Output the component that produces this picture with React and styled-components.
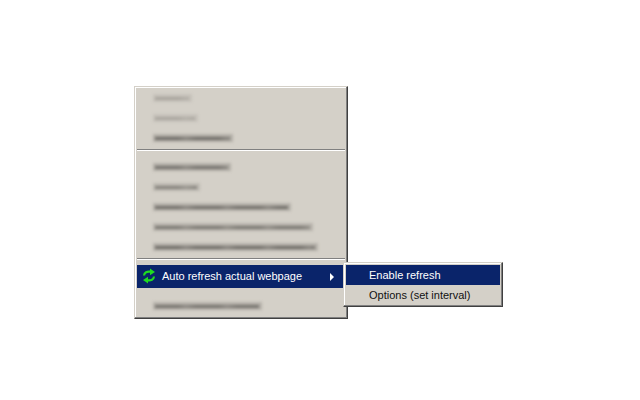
import React from 'react'
import styled, { createGlobalStyle } from 'styled-components'

const Global = createGlobalStyle`
  html, body { margin: 0; padding: 0; background: #fff; }
`

const Page = styled.div`
  width: 640px;
  height: 400px;
  padding: 86px 0 0 134px;
  box-sizing: border-box;
  font-family: "Liberation Sans", Arial, sans-serif;
  overflow: hidden;
`

const Menu = styled.div`
  position: relative;
  width: 214px;
  height: 233px;
  box-sizing: border-box;
  padding: 1px 2px;
  background: #d4d0c8;
  border: 1px solid;
  border-color: #d4d0c8 #404040 #404040 #d4d0c8;
  box-shadow: inset -1px -1px 0 #808080, inset 1px 1px 0 #fff;
  display: flex;
  flex-direction: column;
`

const Row = styled.div`
  height: 20px;
  flex: none;
  display: flex;
  align-items: center;
  padding-left: 16px;
  margin-top: ${p => p.$gap || 0}px;
`

const Smudge = styled.div`
  position: relative;
  width: ${p => p.$w}px;
  height: 8px;
  background: ${p => p.$base};
  filter: blur(1.6px);

  &::after {
    content: '';
    position: absolute;
    left: 2px;
    right: 3px;
    top: 3px;
    height: 3px;
    background: repeating-linear-gradient(
      to right,
      ${p => p.$c} 0,
      ${p => p.$c} 23px,
      color-mix(in srgb, ${p => p.$c} 65%, ${p => p.$base}) 31px,
      ${p => p.$c} 41px
    );
  }
`

const Separator = styled.div`
  height: 2px;
  flex: none;
  margin-top: 1px;
  background: linear-gradient(#808080 50%, #fff 50%);
`

const Active = styled.div`
  height: 23px;
  flex: none;
  margin-top: 5px;
  box-sizing: border-box;
  padding: 0 0 1px 4px;
  display: flex;
  align-items: center;
  background: #0a246a;
  color: #fff;
  position: relative;
`

const Label = styled.span`
  margin-left: 5px;
  font-size: 11px;
  white-space: nowrap;
`

const Arrow = styled.i`
  position: absolute;
  left: 193px;
  top: 8px;
  border-left: 4px solid #fff;
  border-top: 4px solid transparent;
  border-bottom: 4px solid transparent;
`

const Submenu = styled.div`
  position: absolute;
  left: 208px;
  top: 175px;
  width: 160px;
  height: 45px;
  box-sizing: border-box;
  padding: 2px;
  background: #d4d0c8;
  border: 1px solid;
  border-color: #d4d0c8 #404040 #404040 #d4d0c8;
  box-shadow: inset -1px -1px 0 #808080, inset 1px 1px 0 #fff;
`

const SubItem = styled.div`
  height: 20px;
  display: flex;
  align-items: center;
  padding-left: 23px;
  font-size: 11px;
  background: ${p => (p.$on ? '#0a246a' : 'transparent')};
  color: ${p => (p.$on ? '#fff' : '#111')};
`

const RefreshIcon = () => (
  <svg width="16" height="16" viewBox="0 0 16 16" fill="none">
    <path d="M3 7.5 C3.3 4.4 6 3.2 9.5 3.7" stroke="#1fdc1f" strokeWidth="2.2" />
    <path d="M9 0.6 L14 4 L9 7.2 Z" fill="#1fdc1f" />
    <path d="M13 8.5 C12.7 11.6 10 12.8 6.5 12.3" stroke="#1fdc1f" strokeWidth="2.2" />
    <path d="M7 15.4 L2 12 L7 8.8 Z" fill="#1fdc1f" />
  </svg>
)

const top = [
  [39, '#a8a49d', '#c6c2bb'],
  [45, '#aaa69f', '#c6c2bb'],
  [80, '#6e6b66', '#b3afa8'],
]
const middle = [
  [78, '#75726d', '#b3afa8'],
  [47, '#85827c', '#bdb9b2'],
  [138, '#716e69', '#b5b1aa'],
  [160, '#7a7771', '#b8b4ad'],
  [165, '#6e6b66', '#b5b1aa'],
]

const SmudgeRow = ({ w, c, base, gap }) => (
  <Row $gap={gap}>
    <Smudge $w={w} $c={c} $base={base} />
  </Row>
)

export default function App() {
  return (
    <Page>
      <Global />
      <Menu>
        {top.map(([w, c, base]) => (
          <SmudgeRow key={w} w={w} c={c} base={base} />
        ))}
        <Separator />
        {middle.map(([w, c, base], i) => (
          <SmudgeRow key={w} w={w} c={c} base={base} gap={i === 0 ? 6 : 0} />
        ))}
        <Separator />
        <Active>
          <RefreshIcon />
          <Label>Auto refresh actual webpage</Label>
          <Arrow />
        </Active>
        <SmudgeRow w={109} c="#75726d" base="#b5b1aa" gap={8} />
        <Submenu>
          <SubItem $on>Enable refresh</SubItem>
          <SubItem>Options (set interval)</SubItem>
        </Submenu>
      </Menu>
    </Page>
  )
}
